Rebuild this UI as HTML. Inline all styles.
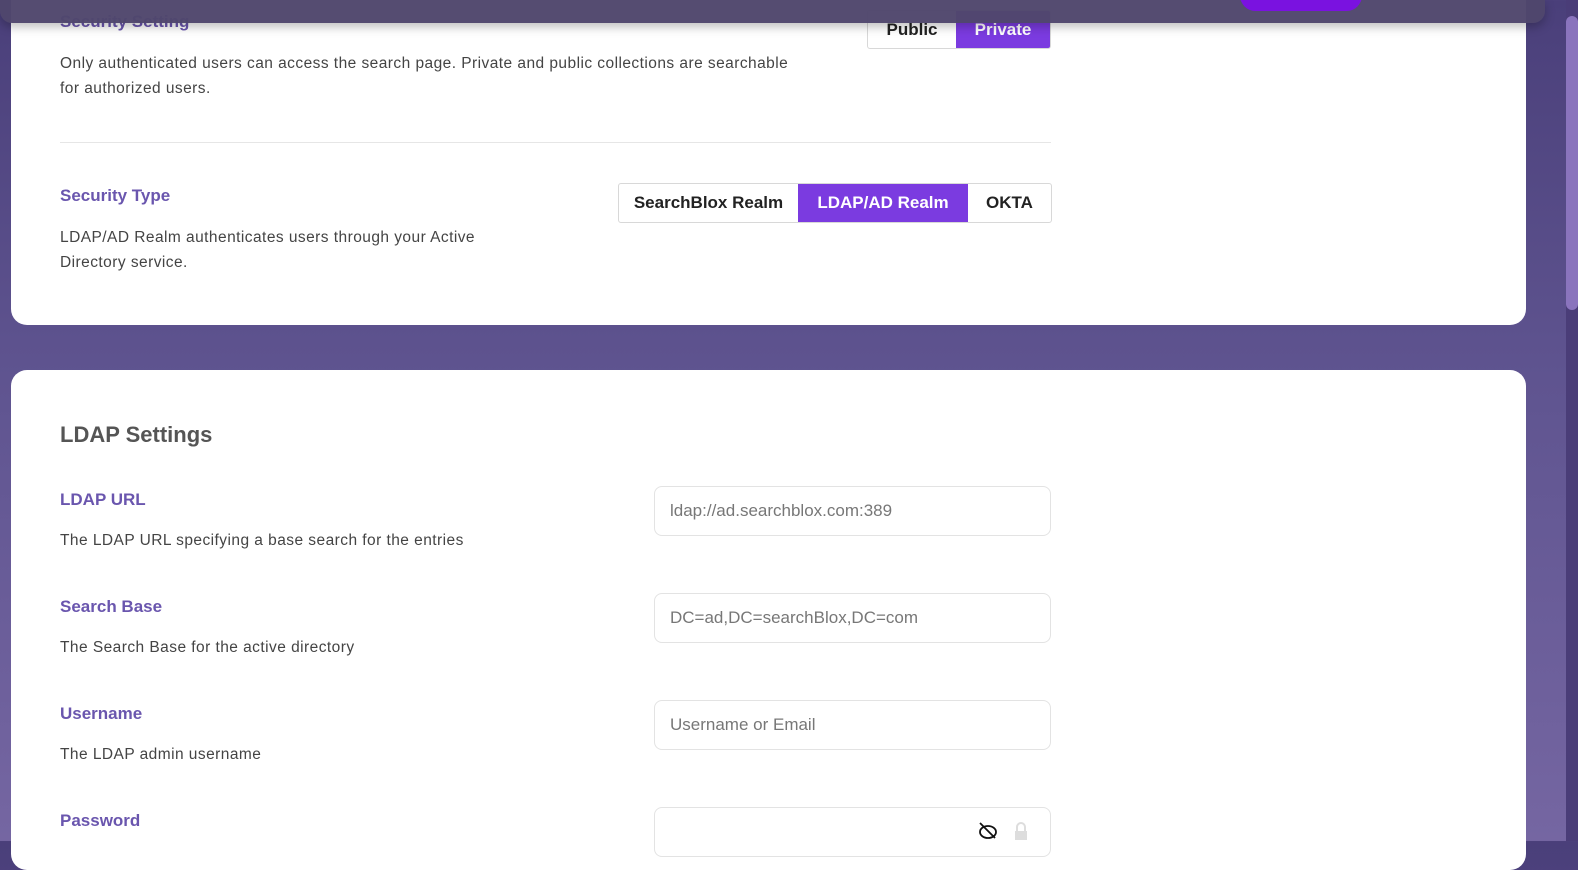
<!DOCTYPE html>
<html><head><style>
*{box-sizing:border-box;margin:0;padding:0}
body{width:1578px;height:841px;overflow:hidden;background:linear-gradient(180deg,#4a3f7a 0%,#5f5490 45%,#7566a2 100%);font-family:"Liberation Sans",sans-serif;position:relative}
.card{position:absolute;left:11px;width:1515px;background:#fff;border-radius:16px}
.lbl{position:absolute;left:49px;color:#6a56ae;font-weight:bold;font-size:17px}
.desc{position:absolute;left:49px;color:#444;font-size:15.5px;line-height:25px;letter-spacing:0.45px}
.seg{position:absolute;display:flex;border:1px solid #d8d8d8;border-radius:3px;overflow:hidden;font-size:17px;color:#222;font-weight:600}
.seg div{display:flex;align-items:center;justify-content:center}
.seg .on{background:#7b3be0;color:#fff}
.inp{position:absolute;left:643px;width:397px;height:50px;border:1px solid #e3e3e3;border-radius:8px;color:#777;font-size:17px;padding-left:15px;line-height:48px}
</style></head><body>
<div class="card" style="top:-20px;height:345px">
  <div class="lbl" style="top:32px">Security Setting</div>
  <div class="desc" style="top:71px">Only authenticated users can access the search page. Private and public collections are searchable<br>for authorized users.</div>
  <div class="seg" style="left:856px;top:30px;height:39px"><div style="width:88px">Public</div><div class="on" style="width:94px">Private</div></div>
  <div style="position:absolute;left:49px;top:162px;width:991px;height:1px;background:#e6e6e6"></div>
  <div class="lbl" style="top:206px">Security Type</div>
  <div class="desc" style="top:245px">LDAP/AD Realm authenticates users through your Active<br>Directory service.</div>
  <div class="seg" style="left:607px;top:203px;height:40px"><div style="width:179px">SearchBlox Realm</div><div class="on" style="width:170px">LDAP/AD Realm</div><div style="width:83px">OKTA</div></div>
</div>
<div class="card" style="top:370px;height:500px">
  <div style="position:absolute;left:49px;top:52px;font-size:22px;font-weight:bold;color:#555">LDAP Settings</div>
  <div class="lbl" style="top:120px">LDAP URL</div>
  <div class="desc" style="top:158px">The LDAP URL specifying a base search for the entries</div>
  <div class="inp" style="top:116px">ldap://ad.searchblox.com:389</div>
  <div class="lbl" style="top:227px">Search Base</div>
  <div class="desc" style="top:265px">The Search Base for the active directory</div>
  <div class="inp" style="top:223px">DC=ad,DC=searchBlox,DC=com</div>
  <div class="lbl" style="top:334px">Username</div>
  <div class="desc" style="top:372px">The LDAP admin username</div>
  <div class="inp" style="top:330px">Username or Email</div>
  <div class="lbl" style="top:441px">Password</div>
  <div class="inp" style="top:437px"></div>
  <svg style="position:absolute;left:966px;top:450px" width="24" height="20" viewBox="0 0 24 20"><ellipse cx="11" cy="12" rx="8" ry="6" fill="none" stroke="#111" stroke-width="1.8"/><line x1="3" y1="3" x2="18" y2="18" stroke="#111" stroke-width="1.8"/></svg>
  <svg style="position:absolute;left:1002px;top:452px" width="16" height="18" viewBox="0 0 16 18"><path d="M4 9V5a4 4 0 0 1 8 0v4" fill="none" stroke="#ddd" stroke-width="2"/><rect x="2" y="9" width="12" height="9" fill="#ddd"/></svg>
</div>
<div style="position:absolute;left:0;top:0;width:1545px;height:23px;background:rgba(80,70,108,0.97);border-radius:0 0 12px 12px;box-shadow:0 4px 10px rgba(0,0,0,.25)"></div>
<div style="position:absolute;left:1240px;top:-20px;width:122px;height:31px;background:#7a12e0;border-radius:16px"></div>
<div style="position:absolute;left:1566px;top:0;width:12px;height:841px;background:#4a3d78"></div>
<div style="position:absolute;left:1566px;top:16px;width:12px;height:294px;background:#8a74bd;border-radius:6px"></div>
</body></html>
